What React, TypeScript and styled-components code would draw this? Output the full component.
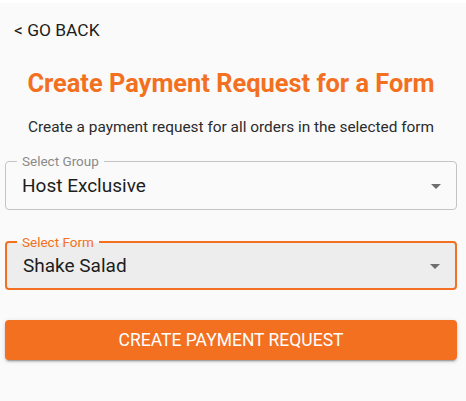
import { createGlobalStyle } from "styled-components";
import styled from "styled-components";

const ORANGE = "#f37021";

const GlobalStyle = createGlobalStyle`
  html, body {
    margin: 0;
    padding: 0;
    background: #ffffff;
    font-family: Roboto, "Liberation Sans", Arial, sans-serif;
  }
  * {
    box-sizing: border-box;
  }
`;

const Page = styled.main`
  margin-top: 3px;
  width: 466px;
  min-height: 398px;
  background: #fafafa;
  padding: 15px 9px 0 5px;
  display: flex;
  flex-direction: column;
`;

const BackLink = styled.a`
  align-self: flex-start;
  margin-left: 9px;
  font-size: 17.4px;
  line-height: 24px;
  color: #1d1d1d;
  cursor: pointer;
  text-decoration: none;
`;

const Title = styled.h1`
  margin: 25px 0 0;
  text-align: center;
  font-size: 25.4px;
  line-height: 32px;
  font-weight: 700;
  color: ${ORANGE};
`;

const Subtitle = styled.p`
  margin: 18px 0 0;
  text-align: center;
  font-size: 15.4px;
  line-height: 20px;
  color: #2b2b2b;
`;

const Field = styled.div<{ $focused?: boolean }>`
  position: relative;
  margin-top: ${(p) => (p.$focused ? "31px" : "24px")};
  padding: 0 16px;
  height: 49px;
  display: flex;
  align-items: center;
  justify-content: space-between;
  border: ${(p) => (p.$focused ? `2px solid ${ORANGE}` : "1px solid #c4c4c4")};
  border-radius: 4px;
  background: ${(p) => (p.$focused ? "#ededed" : "transparent")};
`;

const Label = styled.span<{ $focused?: boolean }>`
  position: absolute;
  top: -10px;
  left: ${(p) => (p.$focused ? "10px" : "11px")};
  padding: 0 5px;
  font-size: 13.5px;
  line-height: 18px;
  color: ${(p) => (p.$focused ? ORANGE : "#8a8a8a")};
  background: linear-gradient(to bottom, #fafafa 10px, transparent 10px);
`;

const Value = styled.span`
  font-size: 19px;
  line-height: 24px;
  color: #1d1d1d;
`;

const Caret = styled.svg`
  width: 24px;
  height: 24px;
  margin-right: -8px;
  fill: #6e6e6e;
`;

const SubmitButton = styled.button`
  margin-top: 30px;
  height: 40px;
  border: none;
  border-radius: 4px;
  background: ${ORANGE};
  color: #ffffff;
  font-family: Roboto, "Liberation Sans", Arial, sans-serif;
  font-size: 17.5px;
  font-weight: 400;
  text-transform: uppercase;
  box-shadow: 0 3px 1px -2px rgba(0, 0, 0, 0.2), 0 2px 2px 0 rgba(0, 0, 0, 0.14),
    0 1px 5px 0 rgba(0, 0, 0, 0.12);
  cursor: pointer;
`;

const ArrowDown = () => (
  <Caret viewBox="0 0 24 24">
    <path d="M7 10l5 5 5-5z" />
  </Caret>
);

const SelectField = ({
  label,
  value,
  focused,
}: {
  label: string;
  value: string;
  focused?: boolean;
}) => (
  <Field $focused={focused}>
    <Label $focused={focused}>{label}</Label>
    <Value>{value}</Value>
    <ArrowDown />
  </Field>
);

const App = () => {
  return (
    <>
      <GlobalStyle />
      <Page>
        <BackLink>&lt; GO BACK</BackLink>
        <Title>Create Payment Request for a Form</Title>
        <Subtitle>Create a payment request for all orders in the selected form</Subtitle>
        <SelectField label="Select Group" value="Host Exclusive" />
        <SelectField label="Select Form" value="Shake Salad" focused />
        <SubmitButton>Create Payment Request</SubmitButton>
      </Page>
    </>
  );
};

export default App;
